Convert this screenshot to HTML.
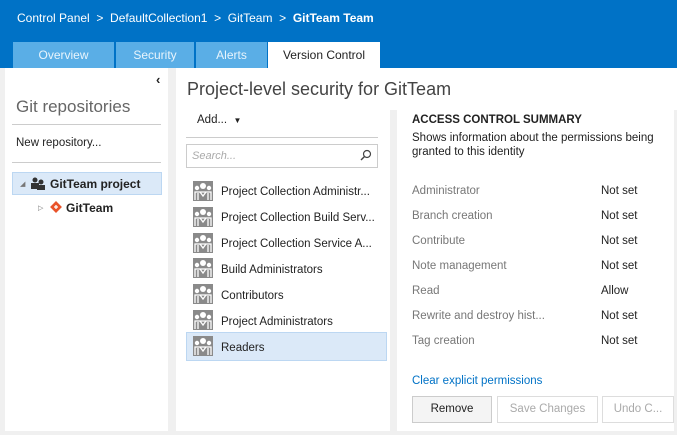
<!DOCTYPE html>
<html><head><meta charset="utf-8"><style>
*{margin:0;padding:0;box-sizing:border-box}
body{width:677px;height:435px;overflow:hidden;background:#f0f0f0;font-family:"Liberation Sans",sans-serif;font-size:11.5px;color:#222;position:relative}
.a{position:absolute;white-space:nowrap}
#hdr{position:absolute;left:0;top:0;width:677px;height:68px;background:#0072c6}
.crumb{color:#fff;font-size:12px;top:11px}
.tab{position:absolute;top:42px;height:26px;background:#5aaee6;color:#e8f4fc;font-size:12px;text-align:center;line-height:26px}
.icon{position:absolute;left:193px;width:20px;height:20px}
.row{left:221px;font-size:11.5px}
.pl{left:412px;color:#777;font-size:11.5px}
.pv{left:601px;font-size:11.5px}
.btn{position:absolute;top:396px;height:27px;border:1px solid #ddd;background:#fff;color:#aaa;font-size:11.5px;text-align:center;line-height:25px}
</style></head><body>
<svg width="0" height="0" style="position:absolute"><defs><symbol id="g" viewBox="0 0 20 20"><rect width="20" height="20" fill="#8a8a8a"/><circle cx="10" cy="5" r="3" fill="#fff"/><circle cx="4" cy="7" r="2.2" fill="#fff"/><circle cx="16" cy="7" r="2.2" fill="#fff"/><path d="M2 19V11h16v8M5 12v7M15 12v7M7 11l3 4 3-4" stroke="#fff" stroke-width="1.3" fill="none"/></symbol></defs></svg>
<div id="hdr"></div>
<div class="a crumb" style="left:17px">Control Panel &nbsp;&gt;&nbsp; DefaultCollection1 &nbsp;&gt;&nbsp; GitTeam &nbsp;&gt;&nbsp; <b>GitTeam Team</b></div>
<div class="tab" style="left:13px;width:101px">Overview</div>
<div class="tab" style="left:116px;width:78px">Security</div>
<div class="tab" style="left:196px;width:71px">Alerts</div>
<div class="tab" style="left:268px;width:112px;background:#fff;color:#222">Version Control</div>

<div style="position:absolute;left:5px;top:68px;width:163px;height:363px;background:#fff"></div>
<div style="position:absolute;left:176px;top:68px;width:498px;height:363px;background:#fff"></div>
<div style="position:absolute;left:176px;top:68px;width:501px;height:42px;background:#fff"></div>
<div style="position:absolute;left:390px;top:110px;width:7px;height:321px;background:#f0f0f0"></div>

<div class="a" style="left:156px;top:72px;font-size:13px;font-weight:bold">‹</div>
<div class="a" style="left:16px;top:97px;font-size:17px;color:#666">Git repositories</div>
<div style="position:absolute;left:12px;top:124px;width:149px;height:1px;background:#ccc"></div>
<div class="a" style="left:16px;top:137px;font-size:11.5px">New repository...</div>
<div style="position:absolute;left:12px;top:162px;width:149px;height:1px;background:#ccc"></div>
<div style="position:absolute;left:12px;top:172px;width:150px;height:23px;background:#dbe9f8;border:1px solid #bcd7f2"></div>
<div class="a" style="left:20px;top:180px;font-size:7px;color:#777">◢</div>
<svg class="a" style="left:31px;top:177px" width="14" height="13"><circle cx="4" cy="3" r="2.5" fill="#333"/><rect x="0" y="6" width="8" height="6" fill="#333"/><circle cx="10" cy="5" r="2.5" fill="#333"/><rect x="6" y="8" width="8" height="5" fill="#333"/></svg>
<div class="a" style="left:50px;top:177px;font-weight:bold;font-size:12px">GitTeam project</div>
<div class="a" style="left:38px;top:204px;font-size:7px;color:#777">▷</div>
<svg class="a" style="left:50px;top:201px" width="12" height="12"><rect x="1.8" y="1.8" width="8.4" height="8.4" transform="rotate(45 6 6)" fill="#e9532a"/><path d="M4 6h4M6 4v4" stroke="#fff" stroke-width="1.3"/></svg>
<div class="a" style="left:66px;top:201px;font-weight:bold;font-size:12px">GitTeam</div>

<div class="a" style="left:187px;top:79px;font-size:18px;color:#444">Project-level security for GitTeam</div>
<div class="a" style="left:197px;top:114px;font-size:11.5px">Add... &nbsp;<span style="font-size:8px">▼</span></div>
<div style="position:absolute;left:186px;top:137px;width:192px;height:1px;background:#ccc"></div>
<div style="position:absolute;left:186px;top:144px;width:192px;height:24px;border:1px solid #ccc"></div>
<div class="a" style="left:192px;top:150px;font-size:11px;color:#aaa;font-style:italic">Search...</div>
<svg class="a" style="left:360px;top:149px" width="12" height="12"><circle cx="7" cy="5" r="3.5" fill="none" stroke="#444" stroke-width="1.2"/><path d="M4.5 7.5L1 11" stroke="#444" stroke-width="1.4"/></svg>
<div style="position:absolute;left:186px;top:332px;width:201px;height:29px;background:#dbe9f8;border:1px solid #bcd7f2"></div>
<svg class="icon" style="top:181px"><use href="#g"/></svg><div class="a row" style="top:186px">Project Collection Administr...</div>
<svg class="icon" style="top:207px"><use href="#g"/></svg><div class="a row" style="top:212px">Project Collection Build Serv...</div>
<svg class="icon" style="top:233px"><use href="#g"/></svg><div class="a row" style="top:238px">Project Collection Service A...</div>
<svg class="icon" style="top:258px"><use href="#g"/></svg><div class="a row" style="top:264px">Build Administrators</div>
<svg class="icon" style="top:284px"><use href="#g"/></svg><div class="a row" style="top:290px">Contributors</div>
<svg class="icon" style="top:310px"><use href="#g"/></svg><div class="a row" style="top:316px">Project Administrators</div>
<svg class="icon" style="top:336px"><use href="#g"/></svg><div class="a row" style="top:342px">Readers</div>

<div class="a" style="left:412px;top:114px;font-weight:bold;font-size:11.5px">ACCESS CONTROL SUMMARY</div>
<div class="a" style="left:412px;top:131px;font-size:11.5px;line-height:14px">Shows information about the permissions being<br>granted to this identity</div>
<div class="a pl" style="top:185px">Administrator</div><div class="a pv" style="top:185px">Not set</div>
<div class="a pl" style="top:210px">Branch creation</div><div class="a pv" style="top:210px">Not set</div>
<div class="a pl" style="top:235px">Contribute</div><div class="a pv" style="top:235px">Not set</div>
<div class="a pl" style="top:260px">Note management</div><div class="a pv" style="top:260px">Not set</div>
<div class="a pl" style="top:285px">Read</div><div class="a pv" style="top:285px">Allow</div>
<div class="a pl" style="top:310px">Rewrite and destroy hist...</div><div class="a pv" style="top:310px">Not set</div>
<div class="a pl" style="top:335px">Tag creation</div><div class="a pv" style="top:335px">Not set</div>
<div class="a" style="left:412px;top:375px;color:#0072c6">Clear explicit permissions</div>
<div class="btn" style="left:412px;width:80px;background:#f4f4f4;border-color:#ccc;color:#222">Remove</div>
<div class="btn" style="left:497px;width:101px">Save Changes</div>
<div class="btn" style="left:602px;width:72px">Undo C...</div>
</body></html>
